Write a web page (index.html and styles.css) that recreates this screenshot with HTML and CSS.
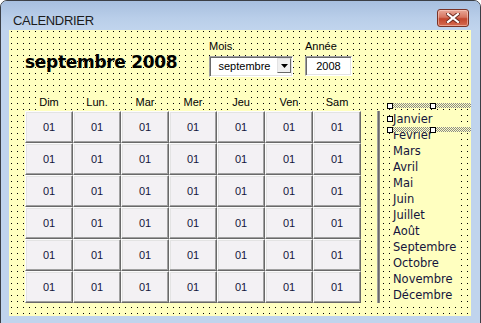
FILE: index.html
```html
<!DOCTYPE html>
<html lang="fr">
<head>
    <meta charset="UTF-8">
    <title>CALENDRIER</title>
    <link rel="stylesheet" href="styles.css">
</head>
<body>
    <div class="window">
        <div class="titlebar">
            <span class="title">CALENDRIER</span>
            <span class="close">
                <svg width="14" height="10" viewBox="0 0 14 10">
                    <path d="M2 1 L12 9 M12 1 L2 9" stroke="#6b2a20" stroke-width="4" stroke-linecap="square"/>
                    <path d="M2 1 L12 9 M12 1 L2 9" stroke="#fff" stroke-width="2.2" stroke-linecap="square"/>
                </svg>
            </span>
        </div>
        <div class="client">
            <div class="top">
                <h1 class="heading">septembre 2008</h1>
                <div class="field">
                    <label>Mois</label>
                    <div class="combo">
                        <span class="combo-value">septembre</span>
                        <span class="combo-btn">
                            <svg width="7" height="4" viewBox="0 0 7 4"><path d="M0 0 H7 L3.5 4 Z" fill="#000"/></svg>
                        </span>
                    </div>
                </div>
                <div class="field field-year">
                    <label>Année</label>
                    <div class="textbox">2008</div>
                </div>
            </div>
            <div class="main">
                <div class="calendar">
                    <div class="days">
                        <span>Dim</span><span>Lun.</span><span>Mar</span><span>Mer</span><span>Jeu</span><span>Ven</span><span>Sam</span>
                    </div>
                    <div class="grid" id="grid"></div>
                </div>
                <div class="separator"></div>
                <ul class="months">
                    <li>Janvier</li>
                    <li>Février</li>
                    <li>Mars</li>
                    <li>Avril</li>
                    <li>Mai</li>
                    <li>Juin</li>
                    <li>Juillet</li>
                    <li>Août</li>
                    <li>Septembre</li>
                    <li>Octobre</li>
                    <li>Novembre</li>
                    <li>Décembre</li>
                </ul>
            </div>
            <div class="selection">
                <span class="band band-top"></span>
                <span class="band band-bottom"></span>
                <span class="handle h1"></span>
                <span class="handle h2"></span>
                <span class="handle h3"></span>
                <span class="handle h4"></span>
                <span class="handle h5"></span>
            </div>
        </div>
    </div>
    <script>
        const grid = document.getElementById('grid');
        for (let i = 0; i < 42; i++) {
            const cell = document.createElement('button');
            cell.className = 'day';
            cell.textContent = '01';
            grid.appendChild(cell);
        }
    </script>
</body>
</html>
```

FILE: styles.css
```css
body {
    margin: 0;
    font-family: "Liberation Sans", Arial, sans-serif;
    overflow: hidden;
}
.window {
    width: 481px;
    height: 330px;
    box-sizing: border-box;
    border: 1px solid #3b3f46;
    border-radius: 7px 7px 0 0;
    background: #c0d4ed;
    display: flex;
    flex-direction: column;
}
.titlebar {
    height: 28px;
    display: flex;
    justify-content: space-between;
    align-items: flex-start;
    background: linear-gradient(#a7bfdf, #b9cee9 60%, #c0d4ed);
    border-radius: 6px 6px 0 0;
}
.title {
    padding: 12px 0 0 12px;
    font-size: 13px;
    line-height: 15px;
    letter-spacing: -0.3px;
    color: #1b1b1b;
}
.close {
    width: 30px;
    height: 16px;
    margin: 8px 11px 0 0;
    border: 1px solid #7a3326;
    border-radius: 3px;
    background: linear-gradient(#e9a898, #d77560 45%, #c2462d 55%, #d66b50);
    box-shadow: inset 0 0 0 1px rgba(255, 220, 210, 0.5);
    display: flex;
    align-items: center;
    justify-content: center;
}
.client {
    position: relative;
    margin: 1px 9px 0 8px;
    height: 286px;
    box-sizing: border-box;
    padding: 10px 0 0 16px;
    background-color: #ffffc0;
    background-image: linear-gradient(to right, transparent 1px, #ffffc0 1px), linear-gradient(#000 1px, transparent 1px);
    background-size: 6px 6px;
    background-position: 2px 1px;
}
.top {
    display: flex;
    height: 54px;
}
.heading {
    width: 184px;
    flex: none;
    margin: 11px 0 0 0;
    font-family: "DejaVu Sans", sans-serif;
    font-size: 17px;
    line-height: 22px;
    letter-spacing: -0.3px;
    font-weight: bold;
    color: #000;
}
.field {
    display: flex;
    flex-direction: column;
    align-items: flex-start;
}
.field label {
    font-size: 11px;
    line-height: 13px;
    color: #000;
    background: #ffffc0;
}
.field-year {
    margin-left: 12px;
}
.combo {
    margin-top: 3px;
    width: 84px;
    height: 21px;
    box-sizing: border-box;
    display: flex;
    background: #fff;
    border: 1px solid;
    border-color: #a0a0a0 #fff #fff #a0a0a0;
    box-shadow: inset 1px 1px #696969, inset -1px -1px #e3e3e3;
}
.combo-value {
    flex: 1;
    text-align: center;
    font-size: 11px;
    line-height: 19px;
    padding-left: 2px;
}
.combo-btn {
    width: 14px;
    height: 15px;
    margin: 1px 1px 0 0;
    box-sizing: border-box;
    background: #f0f0f0;
    border: 1px solid;
    border-color: #e3e3e3 #696969 #696969 #e3e3e3;
    display: flex;
    align-items: center;
    justify-content: center;
}
.textbox {
    margin-top: 3px;
    width: 47px;
    height: 20px;
    box-sizing: border-box;
    background: #fff;
    border: 1px solid;
    border-color: #a0a0a0 #fff #fff #a0a0a0;
    box-shadow: inset 1px 1px #696969, inset -1px -1px #e3e3e3;
    text-align: center;
    font-size: 11px;
    line-height: 18px;
}
.main {
    display: flex;
    align-items: flex-start;
}
.days {
    display: grid;
    grid-template-columns: repeat(7, 48px);
    height: 17px;
    font-size: 11px;
    line-height: 17px;
    text-align: center;
}
.days span {
    justify-self: center;
    background: #ffffc0;
    padding: 0 1px;
}
.grid {
    display: grid;
    grid-template-columns: repeat(7, 48px);
    grid-auto-rows: 32px;
}
.day {
    margin: 0;
    padding: 0;
    box-sizing: border-box;
    background: #f3f1f4;
    border: 1px solid;
    border-color: #fcfcfc #696969 #696969 #fcfcfc;
    box-shadow: inset -1px -1px #a0a0a0, inset 1px 1px #e3e3e3;
    font-family: "Liberation Sans", Arial, sans-serif;
    font-size: 11px;
    color: #14143c;
}
.separator {
    width: 3px;
    height: 192px;
    margin: 17px 0 0 16px;
    background: linear-gradient(to right, #a0a0a0 1px, #696969 1px 2px, #8a8a8a 2px);
}
.months {
    list-style: none;
    margin: 17px 0 0 13px;
    padding: 0;
    font-family: "DejaVu Sans", sans-serif;
    font-size: 11.5px;
    line-height: 16px;
    color: #14143c;
}
.months li {
    background: #ffffc0;
    padding-right: 1px;
}
.selection {
    position: absolute;
    left: 378px;
    top: 73px;
    width: 84px;
    height: 30px;
}
.band {
    position: absolute;
    left: 5px;
    right: 0;
    height: 5px;
    background: repeating-conic-gradient(#8a8a8a 0 25%, #ffffc0 0 50%) 0 0 / 2px 2px;
}
.band-top {
    top: 0;
}
.band-bottom {
    top: 24px;
}
.handle {
    position: absolute;
    width: 6px;
    height: 6px;
    box-sizing: border-box;
    border: 1px solid #000;
    background: #fff;
}
.h1 { left: 0; top: 0; }
.h2 { left: 43px; top: 0; }
.h3 { left: 0; top: 13px; }
.h4 { left: 0; top: 24px; }
.h5 { left: 43px; top: 24px; }
```
